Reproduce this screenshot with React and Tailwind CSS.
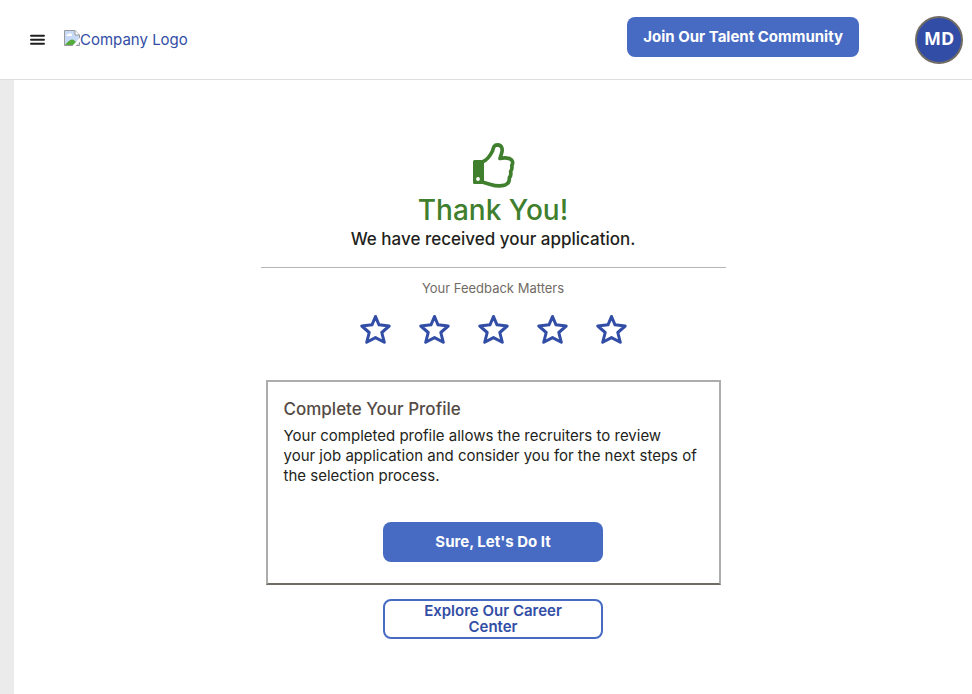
import React, { useState } from "react";

const BrokenImage = () => (
  <svg width="16" height="16" viewBox="0 0 16 16" aria-hidden="true">
    <path d="M0.5 0.5H11L15.5 5V15.5H0.5Z" fill="#c6d9f7" stroke="#9a9a9a" />
    <path d="M11 0.5V5H15.5" fill="#fff" stroke="#9a9a9a" />
    <path d="M2.500 6a1.500 1.500 0 0 1 2-1.800a1.800 1.800 0 0 1 3.200 1.800Z" fill="#fff" />
    <path d="M1 15C3 12 6 9.500 8 9.500C10 9.500 11 11 12 12L9 15Z" fill="#55ab3c" />
    <path d="M16 7.500L8.500 16H11.500L16 11.500Z" fill="#fff" />
  </svg>
);

const ThumbsUp = () => (
  <svg width="43" height="45" viewBox="-1 0 43 45" fill="none" aria-hidden="true">
    <path
      d="M10 18.500C14 17 17.500 12 19.500 8C20.500 4 21 1.900 24.500 1.900C29 2.200 30 6 28.500 10.500L27 15.500C30 14.600 34 14.700 36.800 15.800C40 17 40.200 20 38.800 22.500C39.200 25 39 27 37.600 28.500C38.200 31 37.800 33 36.400 34.500C36.500 38 35 41 32 42C28 43.200 22 42.800 17.500 41.400L10 39.200"
      stroke="#3f7f2e"
      strokeWidth="3.700"
      strokeLinejoin="round"
    />
    <rect x="0" y="17" width="11" height="24" rx="1.500" fill="#3f7f2e" />
    <circle cx="5" cy="36" r="1.900" fill="#fff" />
  </svg>
);

const Star = ({ filled }) => (
  <svg width="31" height="31" viewBox="0 0 31 31" aria-hidden="true">
    <path
      d="M15.500 2.500L19 10.800L29.200 12L21.800 18.500L24.300 28.300L15.500 23.600L6.700 28.300L9.200 18.500L1.800 12L12 10.800Z"
      fill={filled ? "#324da5" : "none"}
      stroke="#324da5"
      strokeWidth="3"
      strokeLinejoin="round"
    />
  </svg>
);

const Header = () => (
  <header className="flex h-20 items-center border-b border-[#dedede] bg-white pl-[30px] pr-[9px]">
    <button type="button" aria-label="Menu" className="mr-[19px]">
      <svg width="15" height="13" viewBox="0 0 15 13" aria-hidden="true">
        <path d="M1 2.800H14M1 6.800H14M1 10.800H14" stroke="#1f1f1f" strokeWidth="1.900" strokeLinecap="round" />
      </svg>
    </button>
    <a href="#" className="flex items-start text-[15px] leading-5 text-[#324da5]">
      <BrokenImage />
      <span>Company Logo</span>
    </a>
    <button
      type="button"
      className="mb-[5px] ml-auto h-10 rounded-lg bg-[#476bc3] px-4 text-[15px] font-bold text-white"
    >
      Join Our Talent Community
    </button>
    <button
      type="button"
      aria-label="Account"
      className="ml-14 h-12 w-12 rounded-full border-2 border-[#716b65] bg-[#324da5] pb-1 font-['Noto_Sans','Open_Sans',sans-serif] text-lg leading-6 font-bold text-white"
    >
      MD
    </button>
  </header>
);

const App = () => {
  const [rating, setRating] = useState(0);

  return (
    <div className="flex min-h-screen flex-col bg-white font-['Inter','Liberation_Sans',sans-serif] text-[#231f20]">
      <Header />
      <div className="flex flex-1">
        <aside className="w-[14px] shrink-0 bg-[#ebebeb]" />
        <main className="flex flex-1 flex-col items-center px-4 pb-10 pt-[63px]">
          <section className="flex w-full max-w-[465px] flex-col items-center">
            <ThumbsUp />
            <h1 className="mt-1 text-[28px] leading-9 font-medium text-[#3f7f2e]">Thank You!</h1>
            <h2 className="text-[17px] leading-[22px] font-medium">We have received your application.</h2>
            <hr className="mt-[17px] w-full border-[#b5b5b5]" />

            {/* Rating */}
            <p className="mt-[10px] text-[13px] leading-5 text-[#716b65]">Your Feedback Matters</p>
            <div className="mt-4 flex gap-7">
              {[1, 2, 3, 4, 5].map((value) => (
                <button
                  key={value}
                  type="button"
                  aria-label={`${value} star`}
                  onClick={() => setRating(value)}
                >
                  <Star filled={value <= rating} />
                </button>
              ))}
            </div>

            {/* Profile card */}
            <div className="mt-[35px] w-full px-[5px]">
              <div className="flex flex-col border-2 border-[#adadab] border-b-[#716b65] px-4 pb-[21px] pt-[15px]">
                <h3 className="text-[17px] leading-6 font-medium text-[#544b45]">Complete Your Profile</h3>
                <p className="mt-[5px] text-[15px] leading-5">
                  Your completed profile allows the recruiters to review <br />
                  your job application and consider you for the next steps of <br />
                  the selection process.
                </p>
                <button
                  type="button"
                  className="mt-9 h-10 w-[220px] self-center rounded-lg bg-[#476bc3] text-[15px] font-bold text-white"
                >
                  Sure, Let's Do It
                </button>
              </div>
            </div>

            <button
              type="button"
              className="mt-[14px] h-10 w-[220px] rounded-lg border-2 border-[#476bc3] px-6 text-[15px] leading-4 font-semibold text-[#324da5]"
            >
              Explore Our Career Center
            </button>
          </section>
        </main>
      </div>
    </div>
  );
};

export default App;
